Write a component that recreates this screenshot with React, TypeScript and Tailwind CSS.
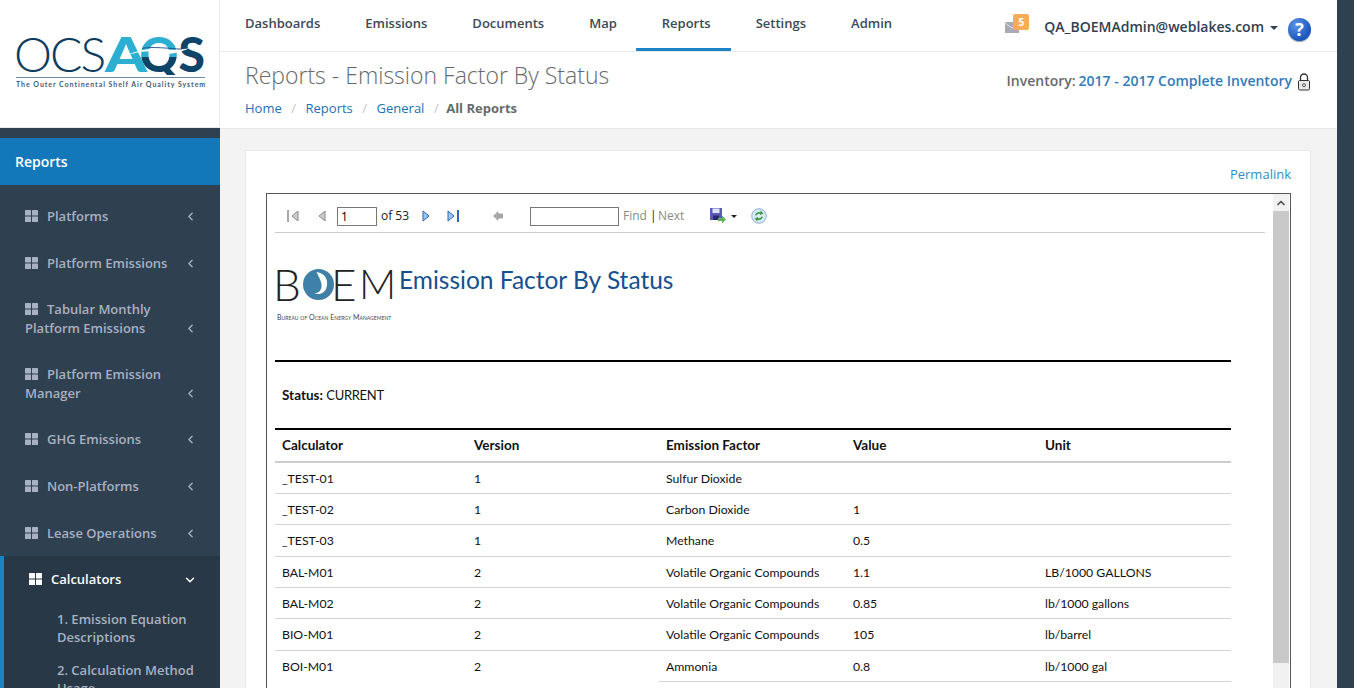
import React from "react";
import { ChevronDown, ChevronLeft, ChevronUp } from "lucide-react";

const tabs = ["Dashboards", "Emissions", "Documents", "Map", "Reports", "Settings", "Admin"];

const menu = [
  "Platforms",
  "Platform Emissions",
  "Tabular Monthly Platform Emissions",
  "Platform Emission Manager",
  "GHG Emissions",
  "Non-Platforms",
  "Lease Operations",
];

const rows = [
  ["_TEST-01", "1", "Sulfur Dioxide", "", ""],
  ["_TEST-02", "1", "Carbon Dioxide", "1", ""],
  ["_TEST-03", "1", "Methane", "0.5", ""],
  ["BAL-M01", "2", "Volatile Organic Compounds", "1.1", "LB/1000 GALLONS"],
  ["BAL-M02", "2", "Volatile Organic Compounds", "0.85", "lb/1000 gallons"],
  ["BIO-M01", "2", "Volatile Organic Compounds", "105", "lb/barrel"],
];

const GridIcon = ({ className }: { className: string }) => (
  <svg viewBox="0 0 13 12" className={className} fill="currentColor">
    <rect x="0" y="0" width="6" height="5.5" rx="0.5" />
    <rect x="7" y="0" width="6" height="5.5" rx="0.5" />
    <rect x="0" y="6.5" width="6" height="5.5" rx="0.5" />
    <rect x="7" y="6.5" width="6" height="5.5" rx="0.5" />
  </svg>
);

const Logo = () => (
  <div className="relative w-[189px] font-['Lato',sans-serif]">
    <div className="flex items-start h-[44px] text-[48px] leading-[42px] whitespace-nowrap">
      <span className="-ml-[2px] w-[92px] font-light tracking-[-2px] text-[#0e3c5e]">OCS</span>
      <span className="w-[35px] font-black text-[#2cafd0] scale-x-[1.25] origin-left">A</span>
      <span className="w-[39px] font-black bg-[linear-gradient(#2cafd0_0%,#2cafd0_56%,#0e4468_56%)] bg-clip-text text-transparent">
        Q
      </span>
      <span className="font-black text-[#0e4468]">S</span>
    </div>
    {/* wave across the Q */}
    <svg viewBox="0 0 80 14" className="absolute left-[110px] top-[11px] w-[72px] h-[14px]">
      <path d="M0 12C14 8 22 6 34 9C44 11 56 11 70 4C58 6 46 6 34 5C22 4 12 7 0 12Z" fill="#fff" />
      <path d="M18 4C30 2 46 4 62 5" stroke="#174a8c" strokeWidth="1" fill="none" />
    </svg>
    <div className="border-t border-[#6f8aa0] pt-[2px] text-[7px] leading-[9px] font-bold tracking-[0.95px] text-[#3f5a75] whitespace-nowrap">
      The Outer Continental Shelf Air Quality System
    </div>
  </div>
);

const Sidebar = () => (
  <aside className="w-[220px] shrink-0 flex flex-col bg-[#2f4050] overflow-hidden">
    <div className="h-[128px] shrink-0 bg-white border-r border-b border-[#e7eaec] pl-[16px] pt-[33px]">
      <Logo />
    </div>
    <div className="mt-[10px] h-[47px] shrink-0 bg-[#1378b9] flex items-center pl-[15px] text-[14px] font-semibold text-white">
      Reports
    </div>
    <ul className="mt-[8px] text-[13px] leading-[18.57px] font-semibold text-[#a7b1c2]">
      {menu.map((item) => (
        <li key={item} className="px-[25px] py-[14px]">
          <GridIcon className="inline-block w-[13px] h-[12px] mr-[9px] align-[-1px]" />
          {item}
          <ChevronLeft className="float-right w-[13px] h-[13px] mt-[3px] -mr-[2px]" strokeWidth={2.5} />
        </li>
      ))}
      <li className="border-l-4 border-[#1c84c6] bg-[#293846] pb-[8px]">
        <div className="pl-[25px] pr-[25px] py-[14px] text-white">
          <GridIcon className="inline-block w-[13px] h-[12px] mr-[9px] align-[-1px]" />
          Calculators
          <ChevronDown className="float-right w-[14px] h-[14px] mt-[3px] -mr-[2px]" strokeWidth={2.5} />
        </div>
        <div className="pl-[53px] pr-[20px] leading-[18px] mt-[-6px] pt-[13px]">
          <div className="pb-[15px]">1. Emission Equation Descriptions</div>
          <div>2. Calculation Method Usage</div>
        </div>
      </li>
    </ul>
  </aside>
);

const TopBar = () => (
  <div className="h-[52px] shrink-0 bg-white border-b border-[#e7eaec] flex justify-between">
    <nav className="flex text-[13px] font-semibold text-[#3b4a58]">
      {tabs.map((t) => (
        <a
          key={t}
          className={
            t === "Reports"
              ? "-ml-[1px] pl-[26px] pr-[20px] pt-[14px] border-b-[3px] border-[#1c84c6]"
              : "pl-[25px] pr-[20px] pt-[14px]"
          }
        >
          {t}
        </a>
      ))}
    </nav>
    <div className="flex items-start pt-[18px] pr-[26px]">
      <div className="relative w-[24px] h-[20px] mr-[15px]">
        <svg viewBox="0 0 14 11" className="absolute left-0 top-[4px] w-[14px] h-[11px]">
          <rect width="14" height="11" fill="#a9abae" />
          <path d="M0 1L7 6L14 1" stroke="#e5e5e5" strokeWidth="1" fill="none" />
        </svg>
        <span className="absolute left-[8px] -top-[4px] w-[16px] h-[16px] rounded-[2px] bg-[#f8ac59] text-white text-[10px] leading-[16px] font-bold text-center">
          5
        </span>
      </div>
      <span className="text-[14px] leading-[18px] font-semibold text-[#2f4050] whitespace-nowrap">
        QA_BOEMAdmin@weblakes.com
      </span>
      <span className="mt-[8px] ml-[6px] border-x-[4px] border-t-[4px] border-x-transparent border-t-[#2f4050]" />
      <span className="ml-[10px] w-[23px] h-[23px] rounded-full bg-[radial-gradient(circle_at_35%_30%,#5b94e6,#1a55bb_70%)] shadow-[0_1px_1px_#9aa] text-white text-[18px] leading-[23px] font-bold text-center">
        ?
      </span>
    </div>
  </div>
);

const Heading = () => (
  <div className="h-[77px] shrink-0 bg-white border-b border-[#e7eaec] flex justify-between px-[25px]">
    <div>
      <h2 className="mt-[7px] text-[23px] leading-[33px] font-light text-[#676a6c]">
        Reports - Emission Factor By Status
      </h2>
      <div className="mt-[7px] flex text-[13px] leading-[18px] text-[#1a72b5]">
        <a>Home</a>
        <span className="px-[9.5px] text-[#c4c4c4]">/</span>
        <a>Reports</a>
        <span className="px-[9.5px] text-[#c4c4c4]">/</span>
        <a>General</a>
        <span className="pl-[9.5px] pr-[7.5px] text-[#c4c4c4]">/</span>
        <strong className="font-bold text-[#676a6c]">All Reports</strong>
      </div>
    </div>
    <div className="flex items-start pt-[19px] text-[14px] leading-[20px] font-semibold text-[#676a6c] whitespace-nowrap mr-[1px]">
      Inventory:
      <a className="ml-[3px] text-[#337ab7]">2017 - 2017 Complete Inventory</a>
      <svg viewBox="0 0 14 18" className="ml-[5px] mt-[2px] w-[14px] h-[18px]" fill="none" stroke="#333">
        <path d="M3.5 7.5V4.5a3.5 3.5 0 017 0v3" strokeWidth="1.3" />
        <rect x="1.5" y="7.5" width="11" height="9.5" rx="1.2" fill="#e9e9e9" strokeWidth="1" />
        <circle cx="7" cy="12.2" r="1.5" strokeWidth="0.8" />
      </svg>
    </div>
  </div>
);

const Tri = ({ dir, fill, stroke }: { dir: "l" | "r"; fill: string; stroke: string }) => (
  <svg viewBox="0 0 8 12" className="w-[8px] h-[12px]">
    <path d={dir === "l" ? "M7 1V11L1 6Z" : "M1 1V11L7 6Z"} fill={fill} stroke={stroke} />
  </svg>
);

const Toolbar = () => (
  <div className="h-[39px] shrink-0 border-b border-[#ccc] flex items-center pl-[12px] pt-[6px] text-[12px] font-['Open_Sans',sans-serif] text-[#222]">
    <span className="flex items-center gap-[2px] w-[12px]">
      <span className="w-[2px] h-[12px] bg-[#aaa] shrink-0" />
      <Tri dir="l" fill="#ccc" stroke="#888" />
    </span>
    <span className="ml-[19px]">
      <Tri dir="l" fill="#ccc" stroke="#888" />
    </span>
    <input
      readOnly
      value="1"
      className="ml-[11px] w-[40px] h-[19px] border border-[#767676] px-[3px] text-[12px] text-black"
    />
    <span className="ml-[4px] w-[29px] whitespace-nowrap">of 53</span>
    <span className="ml-[12px]">
      <Tri dir="r" fill="#9cc4f0" stroke="#2a66c0" />
    </span>
    <span className="ml-[17px] flex items-center gap-[2px] w-[13px]">
      <Tri dir="r" fill="#9cc4f0" stroke="#2a66c0" />
      <span className="w-[2px] h-[12px] bg-[#2a66c0] shrink-0" />
    </span>
    <svg viewBox="0 0 10 10" className="ml-[33px] w-[10px] h-[10px]">
      <path d="M0.5 5L5 0.8V3H9.5V7H5V9.2Z" fill="#aaa" stroke="#888" strokeWidth="0.6" />
    </svg>
    <span className="ml-[27px] w-[89px] h-[19px] border border-[#767676] shrink-0" />
    <span className="ml-[4px] w-[23px] text-[#8a8a8a] whitespace-nowrap">Find</span>
    <span className="ml-[4px] w-[8px] text-[#222]">|</span>
    <span className="w-[26px] text-[#8a8a8a] whitespace-nowrap">Next</span>
    <svg viewBox="0 0 16 16" className="ml-[26px] w-[16px] h-[16px]">
      <rect x="0" y="0" width="12" height="12" fill="#5a5ab8" />
      <rect x="2.5" y="0.5" width="7" height="4.5" fill="#dfe3f5" />
      <rect x="3" y="7.5" width="6" height="4.5" fill="#2a2a70" />
      <path d="M8 10H12V7.5L16 11.5L12 15.5V13H8Z" fill="#5cb25c" />
    </svg>
    <span className="ml-[5px] border-x-[3px] border-t-[3px] border-x-transparent border-t-[#222]" />
    <svg viewBox="0 0 16 16" className="ml-[14px] w-[16px] h-[16px]">
      <circle cx="8" cy="8" r="7.3" fill="#d9e8f8" stroke="#8db2da" />
      <path d="M4 7C5 4.5 7.5 3.5 9.5 4.2V2.5L12.5 5.5L9 7V5.8C7.5 5.5 6 6 5.5 7.5Z" fill="#3c9a3c" />
      <path d="M12 9C11 11.5 8.5 12.5 6.5 11.8V13.5L3.5 10.5L7 9V10.2C8.5 10.5 10 10 10.5 8.5Z" fill="#3c9a3c" />
    </svg>
  </div>
);

const BoemLogo = () => (
  <div className="w-[118px] shrink-0 font-['Lato',sans-serif] text-[#222]">
    <div className="flex items-center -ml-[4px] h-[36px] text-[44px] leading-[36px] font-light whitespace-nowrap">
      <span className="w-[30px] shrink-0">B</span>
      <svg viewBox="0 0 32 32" className="w-[31px] h-[31px] shrink-0">
        <circle cx="16" cy="16" r="16" fill="#3f80a8" />
        <path d="M14 3C23 4 27 12 24 20C22 25 16 27 12 25C17 25 20 21 19 15C18 10 15 6 14 3Z" fill="#fff" />
      </svg>
      <span className="w-[28px] shrink-0 -ml-[3px]">E</span>
      <span className="shrink-0 text-[41px]">M</span>
    </div>
    <div className="mt-[11px] text-[7px] leading-[8px] whitespace-nowrap text-[#444] tracking-[0.05px] [font-variant:small-caps]">
      Bureau of Ocean Energy Management
    </div>
  </div>
);

const colClass = [
  "w-[192px] pl-[7px]",
  "w-[192px] pl-[7px]",
  "w-[187px] pl-[7px]",
  "w-[192px] pl-[7px]",
  "pl-[7px]",
];

const ReportTable = () => (
  <table className="w-[956px] table-fixed border-collapse text-[12.25px] text-[#111]">
    <thead>
      <tr className="border-t-2 border-b-2 border-t-black border-b-[#ccc] h-[33px]">
        {["Calculator", "Version", "Emission Factor", "Value", "Unit"].map((h, i) => (
          <th key={h} className={`${colClass[i]} text-left text-[13.5px] font-bold`}>
            {h}
          </th>
        ))}
      </tr>
    </thead>
    <tbody>
      {rows.map((r) => (
        <tr key={r[0]} className="h-[31.4px] border-b border-[#d4d4d4]">
          {r.map((c, i) => (
            <td key={i} className={`${colClass[i]} pt-[2px]`}>
              {c}
            </td>
          ))}
        </tr>
      ))}
      <tr className="h-[31.4px]">
        <td className={`${colClass[0]} pt-[2px]`}>BOI-M01</td>
        <td className={`${colClass[1]} pt-[2px]`}>2</td>
        <td className={`${colClass[2]} pt-[2px] border-b border-[#d4d4d4]`}>Ammonia</td>
        <td className={`${colClass[3]} pt-[2px] border-b border-[#d4d4d4]`}>0.8</td>
        <td className={`${colClass[4]} pt-[2px] border-b border-[#d4d4d4]`}>lb/1000 gal</td>
      </tr>
    </tbody>
  </table>
);

const Report = () => (
  <div className="flex flex-1 min-h-0 border border-[#555] border-b-0 overflow-hidden">
    <div className="flex-1 min-w-0 pl-[8px] pr-[8px] flex flex-col">
      <Toolbar />
      <div className="font-['Lato',sans-serif]">
        <div className="flex items-start pt-[33px] pl-[2px] h-[129px] w-[956px] border-b-2 border-black">
          <BoemLogo />
          <h1 className="ml-[4px] -mt-[2px] text-[24.5px] leading-[32px] text-[#15508f]">
            Emission Factor By Status
          </h1>
        </div>
      </div>
      <div className="font-['Lato',sans-serif]">
        <p className="pl-[7px] h-[66px] pt-[24px] text-[13px] leading-[18px] text-[#111]">
          <b className="text-[13.5px]">Status:</b> <span className="tracking-[-0.3px]">CURRENT</span>
        </p>
        <ReportTable />
      </div>
    </div>
    <div className="w-[16px] shrink-0 mr-[1px] bg-[#f1f1f1] flex flex-col">
      <div className="h-[17px] flex items-center justify-center">
        <ChevronUp className="w-[12px] h-[12px] text-[#555]" strokeWidth={3.5} />
      </div>
      <div className="h-[452px] bg-[#c9c9c9]" />
    </div>
  </div>
);

export default function App() {
  return (
    <div className="w-screen h-screen flex overflow-hidden bg-[#2f4050] font-['Open_Sans',sans-serif]">
      <Sidebar />
      <main className="flex-1 min-w-0 flex flex-col bg-[#f3f3f4]">
        <TopBar />
        <Heading />
        <div className="flex-1 min-h-0 flex flex-col pt-[21px] pl-[25px] pr-[26px]">
          <div className="flex-1 min-h-0 flex flex-col bg-white border border-[#e7eaec] border-b-0 pl-[20px] pr-[19px]">
            <a className="h-[42px] shrink-0 pt-[14px] text-right text-[13px] leading-[18px] text-[#2f8dc9]">
              Permalink
            </a>
            <Report />
          </div>
        </div>
      </main>
      <div className="w-[17px] shrink-0" />
    </div>
  );
}
